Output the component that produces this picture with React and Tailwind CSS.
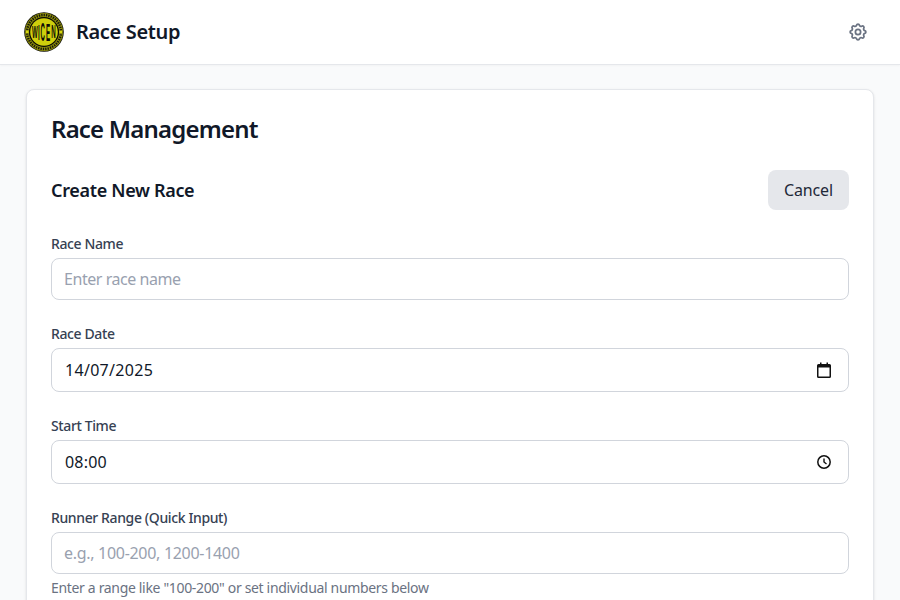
import React from "react";
import { HiOutlineCog } from "react-icons/hi";

function Logo() {
  const letters = [
    ["W", 10.8, 1.0, 0.6],
    ["I", 14.8, 1.3, 0.62],
    ["C", 18.6, 1.5, 0.6],
    ["E", 24, 1.42, 0.62],
    ["N", 29.4, 1.05, 0.62],
  ];
  return (
    <svg width="40" height="40" viewBox="0 0 40 40" className="shrink-0">
      <circle cx="20" cy="20" r="19.800" fill="#0d0d06" />
      <circle cx="20" cy="20" r="17" fill="none" stroke="#8c8c0c" strokeWidth="4" />
      <circle cx="20" cy="20" r="17" fill="none" stroke="#15150a" strokeWidth="2.400" strokeDasharray="1.300 1.100" />
      <circle cx="20" cy="20" r="14.600" fill="#0d0d06" />
      <circle cx="20" cy="20" r="13.800" fill="#cfcf0c" />
      {letters.map(([ch, x, sy, sx]) => (
        <text
          key={ch}
          x="0"
          y="0"
          textAnchor="middle"
          fontFamily="Liberation Sans, sans-serif"
          fontWeight="700"
          fontSize="10"
          fill="#0d0d06"
          transform={`translate(${x} ${20 + 6 * sy}) scale(${sx} ${sy * 1.7})`}
        >
          {ch}
        </text>
      ))}
      <rect x="2" y="18.700" width="2.600" height="2.600" fill="#d8d80e" />
      <rect x="35.400" y="18.700" width="2.600" height="2.600" fill="#d8d80e" />
    </svg>
  );
}

function CalendarGlyph() {
  return (
    <svg width="14" height="16" viewBox="0 0 14 16" className="shrink-0">
      <path d="M3 0.500h1.500V2h5V0.500H11V2h1.500A1.500 1.500 0 0 1 14 3.500v11a1.500 1.500 0 0 1-1.500 1.500h-11A1.500 1.500 0 0 1 0 14.500v-11A1.500 1.500 0 0 1 1.500 2H3z" fill="#111" />
      <rect x="1.500" y="5.500" width="11" height="9" fill="#fff" />
    </svg>
  );
}

function ClockGlyph() {
  return (
    <svg width="14" height="14" viewBox="0 0 14 14" className="shrink-0">
      <circle cx="7" cy="7" r="6.200" fill="none" stroke="#111" strokeWidth="1.500" />
      <path d="M7 3.500V7l2.500 2" fill="none" stroke="#111" strokeWidth="1.400" />
    </svg>
  );
}

function Field({ label, children, help }) {
  return (
    <div>
      <label className="block text-sm font-medium text-gray-700 leading-5 mb-1 tracking-[-0.38px]">{label}</label>
      {children}
      {help && <p className="text-sm leading-5 text-gray-500 mt-1 tracking-[-0.33px]">{help}</p>}
    </div>
  );
}

function TextField({ placeholder, tracking }) {
  return (
    <input
      type="text"
      placeholder={placeholder}
      className={`block w-full h-[42px] px-3 rounded-lg border border-gray-300 bg-white text-base text-gray-900 placeholder:text-gray-400 outline-none ${tracking}`}
    />
  );
}

function ValueField({ value, icon, tracking }) {
  return (
    <div className="flex items-center justify-between h-11 pl-[13px] pr-[17px] rounded-lg border border-gray-300 bg-white text-base text-gray-900">
      <span className={tracking}>{value}</span>
      {icon}
    </div>
  );
}

export default function App() {
  return (
    <div
      className="h-[600px] overflow-hidden bg-gray-50"
      style={{ fontFamily: '"Noto Sans", "Open Sans", sans-serif' }}
    >
      <header className="flex items-center justify-between h-[65px] px-6 bg-white border-b border-gray-200 shadow-[0_1px_2px_rgba(0,0,0,0.03)]">
        <div className="flex items-center gap-3">
          <Logo />
          <h1 className="text-xl font-semibold text-gray-900 tracking-[-0.35px]">Race Setup</h1>
        </div>
        <button className="p-[8px] text-gray-500">
          <HiOutlineCog size={20} className="scale-[1.05]" />
        </button>
      </header>
      <main className="px-[26px] pt-6">
        <div className="bg-white rounded-lg border border-gray-200 shadow-sm p-6">
          <h2 className="text-2xl font-semibold text-gray-900 leading-[30px] mb-[26px] tracking-[-0.8px]">Race Management</h2>
          <div className="flex items-center justify-between mb-6">
            <h3 className="text-lg font-semibold text-gray-900 tracking-[-0.33px]">Create New Race</h3>
            <button className="h-10 w-[81px] rounded-lg bg-gray-200 text-base text-gray-800 tracking-[-0.15px]">Cancel</button>
          </div>
          <div className="flex flex-col gap-6">
            <Field label="Race Name">
              <TextField placeholder="Enter race name" tracking="tracking-[-0.45px]" />
            </Field>
            <Field label="Race Date">
              <ValueField value="14/07/2025" icon={<CalendarGlyph />} tracking="tracking-[0.3px]" />
            </Field>
            <Field label="Start Time">
              <ValueField value="08:00" icon={<ClockGlyph />} tracking="tracking-[0.2px]" />
            </Field>
            <Field label="Runner Range (Quick Input)" help={'Enter a range like "100-200" or set individual numbers below'}>
              <TextField placeholder="e.g., 100-200, 1200-1400" tracking="tracking-[-0.3px]" />
            </Field>
          </div>
        </div>
      </main>
    </div>
  );
}
